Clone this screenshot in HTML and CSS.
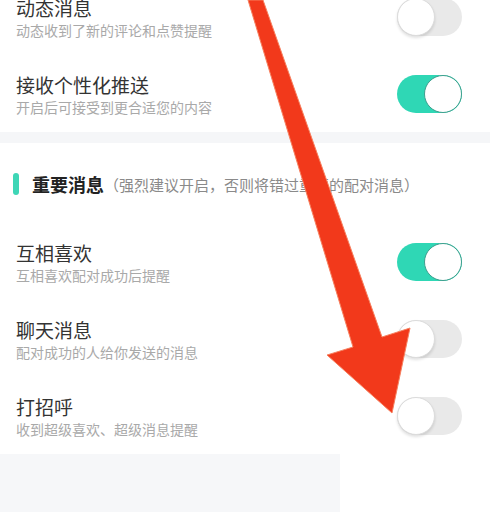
FILE: index.html
```html
<!DOCTYPE html>
<html lang="zh">
<head>
<meta charset="utf-8">
<link rel="stylesheet" href="styles.css">
</head>
<body>
<div class="page">
  <section class="group group-top">
    <div class="row">
      <div class="text">
        <div class="title">动态消息</div>
        <div class="sub">动态收到了新的评论和点赞提醒</div>
      </div>
      <span class="switch"><span class="knob"></span></span>
    </div>
    <div class="row">
      <div class="text">
        <div class="title">接收个性化推送</div>
        <div class="sub">开启后可接受到更合适您的内容</div>
      </div>
      <span class="switch on"><span class="knob"></span></span>
    </div>
  </section>
  <div class="band"></div>
  <section class="group">
    <div class="header">
      <span class="bar"></span>
      <span class="head-title">重要消息</span><span class="head-note">（强烈建议开启，否则将错过重要的配对消息）</span>
    </div>
    <div class="row">
      <div class="text">
        <div class="title">互相喜欢</div>
        <div class="sub">互相喜欢配对成功后提醒</div>
      </div>
      <span class="switch on"><span class="knob"></span></span>
    </div>
    <div class="row">
      <div class="text">
        <div class="title">聊天消息</div>
        <div class="sub">配对成功的人给你发送的消息</div>
      </div>
      <span class="switch"><span class="knob"></span></span>
    </div>
    <div class="row">
      <div class="text">
        <div class="title">打招呼</div>
        <div class="sub">收到超级喜欢、超级消息提醒</div>
      </div>
      <span class="switch"><span class="knob"></span></span>
    </div>
  </section>
  <div class="footer"><div class="footer-gray"></div></div>
  <svg class="arrow" viewBox="0 0 490 512" width="490" height="512">
    <polygon points="248,0 263,0 382,337 410,328 392,413 327,355 353,347" fill="#f2391b" stroke="#f6805f" stroke-width="1" stroke-linejoin="round"/>
  </svg>
</div>
</body>
</html>
```

FILE: styles.css
```css
html, body {
  margin: 0;
  padding: 0;
  background: #ffffff;
}
body {
  font-family: "Noto Sans CJK SC", "Noto Sans", sans-serif;
  width: 490px;
  height: 512px;
  overflow: hidden;
}
.page {
  position: relative;
  width: 490px;
  height: 512px;
  overflow: hidden;
}
.group {
  background: #ffffff;
}
.group-top {
  margin-top: -22px;
}
.row {
  height: 77px;
  display: flex;
  align-items: center;
  justify-content: space-between;
  padding: 0 28px 0 16px;
}
.text {
  display: flex;
  flex-direction: column;
  padding-top: 4px;
}
.title {
  font-size: 19px;
  line-height: 23px;
  color: #333333;
}
.sub {
  font-size: 14px;
  line-height: 22px;
  color: #a9a9a9;
}
.band {
  height: 11px;
  background: #f5f6f8;
}
.header {
  height: 80px;
  display: flex;
  align-items: center;
  padding-left: 13px;
  padding-top: 2px;
  box-sizing: border-box;
}
.bar {
  width: 6px;
  height: 22px;
  border-radius: 3px;
  background: #3ed6b6;
  margin-right: 13px;
}
.head-title {
  font-size: 18px;
  font-weight: 700;
  color: #222222;
}
.head-note {
  font-size: 15px;
  color: #8a8a8a;
}
.switch {
  width: 65px;
  height: 38px;
  border-radius: 19px;
  background: #e9e9e9;
  display: flex;
  align-items: center;
  box-sizing: border-box;
  flex-shrink: 0;
}
.switch .knob {
  width: 38px;
  height: 38px;
  border-radius: 50%;
  background: #ffffff;
  box-sizing: border-box;
  border: 1px solid #dcdcdc;
  box-shadow: 0 2px 3px rgba(0, 0, 0, 0.12);
}
.switch.on {
  background: #2fd7b5;
  justify-content: flex-end;
}
.switch.on .knob {
  border: 1.5px solid #3f9f8e;
  box-shadow: none;
}
.footer {
  display: flex;
  height: 60px;
}
.footer-gray {
  width: 340px;
  background: #f6f7f9;
}
.arrow {
  position: absolute;
  left: 0;
  top: 0;
}
```
